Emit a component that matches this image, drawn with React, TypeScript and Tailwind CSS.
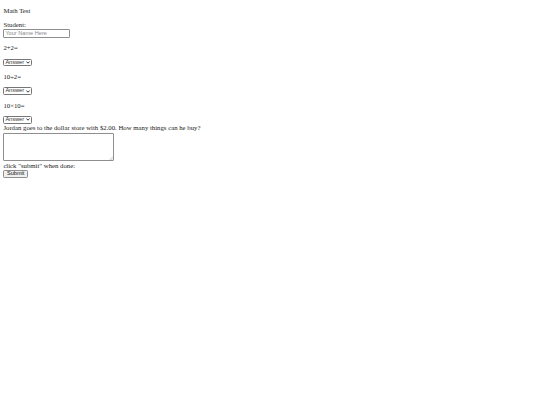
import React from 'react';

// Page is a plain, unstyled HTML form shown at ~0.42 scale (1280px page in a 540px shot)
const AnswerSelect: React.FC = () => (
  <div className="relative">
    <select
      defaultValue="Answer"
      className="block h-[7.8px] w-[29px] appearance-none rounded-[1.5px] border-[0.85px] border-[#767676] bg-white pl-[1px] font-['Liberation_Sans',Arial,sans-serif] text-[5.625px] leading-none text-[#333]"
    >
      <option>Answer</option>
      <option>4</option>
      <option>5</option>
      <option>100</option>
    </select>
    {/* dropdown chevron */}
    <svg className="pointer-events-none absolute right-[2px] top-[2.4px]" width="4" height="3" viewBox="0 0 4 3">
      <path d="M0.4 0.5 L2 2.2 L3.6 0.5" fill="none" stroke="#222" strokeWidth="0.9" />
    </svg>
  </div>
);

const App: React.FC = () => {
  return (
    <div className="min-h-[405px] bg-white px-[3.375px] pt-[6.5px] font-['Liberation_Serif','Times_New_Roman',serif] text-[6.75px] leading-[7.76px] text-[#222] antialiased">
      <p className="mb-[6.6px]">Math Test</p>

      <form className="flex flex-col items-start">
        <span>Student:</span>
        <input
          type="text"
          placeholder="Your Name Here"
          className="h-[9px] w-[66.5px] rounded-[1px] border-[0.85px] border-[#8f8f8f] bg-white px-[1px] font-['Liberation_Sans',Arial,sans-serif] text-[5.625px] placeholder:text-[#8a8a8a]"
        />

        <p className="my-[6.6px]">2+2=</p>
        <AnswerSelect />

        <p className="my-[6.6px]">10÷2=</p>
        <AnswerSelect />

        <p className="my-[6.6px]">10×10=</p>
        <AnswerSelect />

        <span className="mt-[0.6px]">Jordan goes to the dollar store with $2.00. How many things can he buy?</span>
        <div className="relative mt-[1.2px]">
          <textarea className="block h-[27.5px] w-[111px] resize-none rounded-[1px] border-[0.85px] border-[#8f8f8f] bg-white font-['Liberation_Mono',monospace] text-[5.625px]" />
          {/* resize grip */}
          <svg className="pointer-events-none absolute bottom-[1px] right-[1px]" width="4" height="4" viewBox="0 0 4 4">
            <path d="M4 0.5 L0.5 4 M4 2.3 L2.3 4" stroke="#9a9a9a" strokeWidth="0.5" />
          </svg>
        </div>
        <span className="mt-[0.6px]">click "submit" when done:</span>
        <button
          type="button"
          className="mt-[0.4px] h-[8.8px] rounded-[1.2px] border-[0.85px] border-[#8f8f8f] bg-[#efefef] px-[2.6px] font-['Liberation_Sans',Arial,sans-serif] text-[5.625px] leading-none text-[#111]"
        >
          Submit
        </button>
      </form>
    </div>
  );
};

export default App;
